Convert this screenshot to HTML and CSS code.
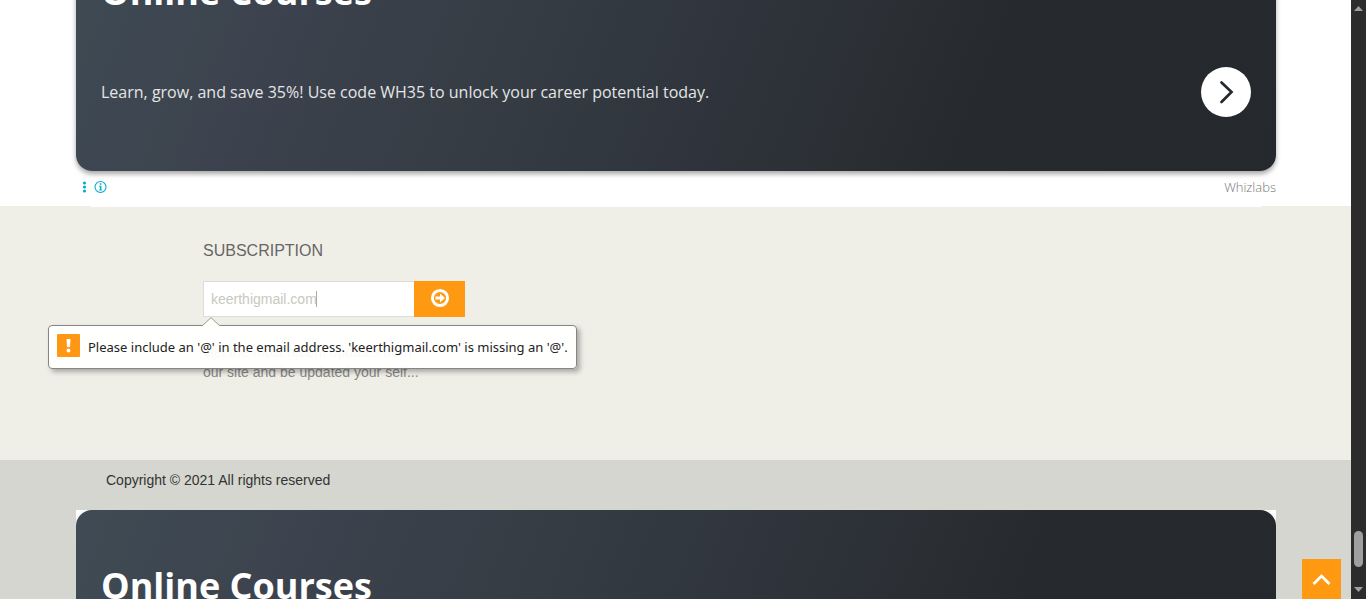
FILE: index.html
```html
<!DOCTYPE html>
<html lang="en">
<head>
<meta charset="utf-8">
<title>Subscription</title>
<link rel="stylesheet" href="styles.css">
</head>
<body>
<div class="page">
  <section class="ad-strip">
    <div class="ad">
      <article class="ad-card">
        <h2 class="ad-title">Online Courses</h2>
        <div class="ad-row">
          <p class="ad-text">Learn, grow, and save 35%! Use code WH35 to unlock your career potential today.</p>
          <button class="ad-go" type="button" aria-label="Open">
            <svg width="50" height="50" viewBox="0 0 50 50"><path d="M20.5 15.5 30.5 25 20.5 35" fill="none" stroke="#262a2e" stroke-width="2.7" stroke-linecap="round"/></svg>
          </button>
        </div>
      </article>
      <div class="ad-meta">
        <svg width="26" height="14" viewBox="0 0 26 14" fill="#00aecd">
          <circle cx="3.500" cy="3" r="1.600"/><circle cx="3.500" cy="7" r="1.600"/><circle cx="3.500" cy="11" r="1.600"/>
          <circle cx="19.500" cy="7" r="5.500" fill="none" stroke="#00aecd" stroke-width="1.100"/>
          <path d="M18.700 3.300h1.700v1.500h-1.700zM18 5.700h2.400v4h.7v.8h-3.100v-.8h.8V6.500H18z"/>
        </svg>
        <a class="ad-brand" href="#">Whizlabs</a>
      </div>
    </div>
  </section>

  <section class="subscribe">
    <form class="subscribe-form" novalidate>
      <label class="subscribe-title" for="email">SUBSCRIPTION</label>
      <div class="field">
        <input class="email" id="email" type="email" value="keerthigmail.com">
        <span class="caret"></span>
        <button class="send" type="submit" aria-label="Subscribe">
          <svg width="20" height="20" viewBox="0 0 20 20"><circle cx="10" cy="10" r="7.600" fill="none" stroke="#fff" stroke-width="3"/><path d="M5.500 8.400h4.500V5.500L15 10l-5 4.500v-2.900H5.500z" fill="#fff"/></svg>
        </button>
        <div class="bubble" role="alert">
          <svg class="bubble-tip" width="18" height="9" viewBox="0 0 18 9"><path d="M0 9 9 .7 18 9" fill="#fdfdfb" stroke="#9a9a97"/></svg>
          <svg width="23" height="27" viewBox="0 0 23 27"><rect width="23" height="23" rx="1" fill="#ff9614"/><path d="M9.500 5h4l-.5 8h-3z" fill="#fff"/><circle cx="11.500" cy="16.500" r="1.900" fill="#fff"/></svg>
          <span>Please include an '@' in the email address. 'keerthigmail.com' is missing an '@'.</span>
        </div>
      </div>
      <p class="note">Get the most recent updates from<br>our site and be updated your self...</p>
    </form>
  </section>

  <footer class="footer">
    <p class="copyright">Copyright © 2021 All rights reserved</p>
    <div class="ad">
      <article class="ad-card">
        <h2 class="ad-title">Online Courses</h2>
      </article>
    </div>
  </footer>
</div>
<div class="scrollbar">
  <svg width="15" height="16" viewBox="0 0 15 16"><path d="M3 11h9L7.500 6z" fill="#9f9f9f"/></svg>
  <div class="track"><div class="thumb"></div></div>
  <svg width="15" height="16" viewBox="0 0 15 16"><path d="M3 4h9L7.500 9z" fill="#9f9f9f"/></svg>
</div>
<button class="to-top" type="button" aria-label="Back to top">
  <svg width="39" height="40" viewBox="0 0 39 40"><path d="M12.500 24 19.500 17l7 7" fill="none" stroke="#fff" stroke-width="2.800" stroke-linecap="square"/></svg>
</button>
</body>
</html>
```
FILE: styles.css
```css
* { box-sizing: border-box; }
body {
  margin: 0;
  height: 100vh;
  display: flex;
  overflow: hidden;
  font-family: "Liberation Sans", Arial, sans-serif;
  font-size: 14px;
  background: #fff;
}
h2, p { margin: 0; }
svg { display: block; flex: none; }
button { border: 0; padding: 0; cursor: pointer; }

.page { flex: 1; min-width: 0; height: 100%; overflow: hidden; display: flex; flex-direction: column; }

.ad-strip { height: 206px; flex: none; display: flex; flex-direction: column; justify-content: flex-end; }
.ad {
  position: relative;
  flex: none;
  margin: 0 75px 0 76px;
  background: #fff;
  font-family: "Open Sans", "Noto Sans", sans-serif;
}
.ad-strip .ad::after {
  content: "";
  position: absolute;
  inset: 100% 15px auto;
  height: 1px;
  background: #fff;
}
.ad-card {
  height: 255px;
  padding: 50px 25px 0;
  border-radius: 16px;
  color: #fff;
  background: linear-gradient(112deg, #3f4b54 0%, #3c424d 20%, #343b42 40%, #2f343c 55%, #2b2f34 66%, #26292d 76%, #25282d 100%);
  box-shadow: 0 3px 5px rgba(0, 0, 0, .35);
}
.footer .ad { overflow: hidden; }
.ad-title { font-size: 36px; line-height: 52px; font-weight: 700; }
.ad-row { display: flex; align-items: center; justify-content: space-between; margin-top: 49px; }
.ad-text { font-size: 16px; line-height: 24px; color: #e4e5e6; }
.ad-go { width: 50px; height: 50px; border-radius: 50%; background: #fff; }
.ad-meta { display: flex; align-items: center; justify-content: space-between; height: 35px; padding: 0 0 3px 5px; }
.ad-brand { font-size: 13px; font-weight: 300; color: #777; text-decoration: none; }

.subscribe { height: 254px; flex: none; background: #f0efe7; padding: 35px 203px 0; }
.subscribe-form { display: flex; flex-direction: column; align-items: flex-start; }
.subscribe-title { font-size: 16px; line-height: 20px; color: #666; }
.field { position: relative; display: flex; margin-top: 20px; height: 36px; }
.email {
  width: 211px;
  padding: 0 7px;
  border: 1px solid #dcdcdc;
  border-right: 0;
  border-radius: 0;
  outline: 0;
  background: #fff;
  font: 14px "Liberation Sans", Arial, sans-serif;
  color: #c8c8c0;
}
.caret { position: absolute; left: 113px; top: 10px; width: 1px; height: 16px; background: #aaa; }
.send { width: 51px; display: flex; justify-content: center; background: #ff9912; padding-top: 7px; }
.bubble {
  position: absolute;
  left: -155px;
  top: 44px;
  min-width: 529px;
  height: 44px;
  display: flex;
  align-items: center;
  gap: 8px;
  padding: 0 8px;
  border: 1px solid #858585;
  border-radius: 4px;
  background: rgba(255, 255, 255, .95);
  box-shadow: 3px 3px 5px rgba(0, 0, 0, .3);
  font-family: "Noto Sans", "Open Sans", sans-serif;
  font-size: 13px;
  color: #222;
  white-space: nowrap;
}
.bubble-tip { position: absolute; left: 153px; top: -9px; }
.note { margin-top: 25px; font-size: 14px; line-height: 20px; color: #888; }

.footer { flex: 1; background: #d5d6cf; }
.copyright { height: 50px; padding: 10px 106px; line-height: 20px; color: #333; }

.scrollbar { width: 15px; flex: none; display: flex; flex-direction: column; background: #2c2c2c; }
.track { flex: 1; display: flex; flex-direction: column; justify-content: flex-end; align-items: center; padding-bottom: 16px; }
.thumb { width: 9px; height: 36px; border-radius: 5px; background: #9f9f9f; }

.to-top { position: fixed; right: 25px; bottom: 0; width: 39px; height: 40px; background: #ff9912; }
```
